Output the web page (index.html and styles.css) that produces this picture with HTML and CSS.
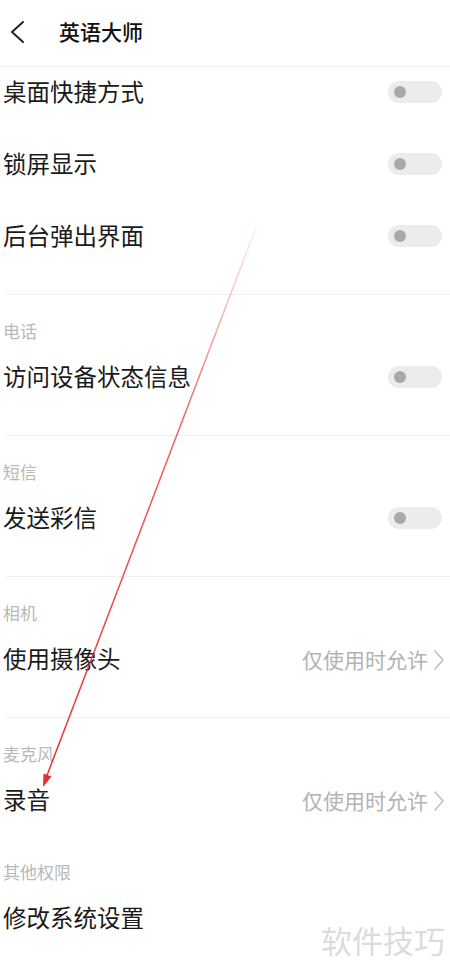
FILE: index.html
```html
<!DOCTYPE html>
<html lang="zh">
<head>
<meta charset="utf-8">
<link rel="stylesheet" href="styles.css">
</head>
<body>
<div class="page">
  <header class="header">
    <svg class="back" width="20" height="24" viewBox="0 0 20 24"><polyline points="14,2 3,12 14,22" fill="none" stroke="#222" stroke-width="2" stroke-linecap="round" stroke-linejoin="round"/></svg>
    <span class="title">英语大师</span>
  </header>

  <div class="row first"><span class="name">桌面快捷方式</span><span class="toggle"><span class="knob"></span></span></div>
  <div class="row"><span class="name">锁屏显示</span><span class="toggle"><span class="knob"></span></span></div>
  <div class="row"><span class="name">后台弹出界面</span><span class="toggle"><span class="knob"></span></span></div>

  <div class="divider"></div>
  <div class="label">电话</div>
  <div class="row"><span class="name">访问设备状态信息</span><span class="toggle"><span class="knob"></span></span></div>

  <div class="divider"></div>
  <div class="label">短信</div>
  <div class="row"><span class="name">发送彩信</span><span class="toggle"><span class="knob"></span></span></div>

  <div class="divider"></div>
  <div class="label">相机</div>
  <div class="row"><span class="name">使用摄像头</span><span class="value">仅使用时允许<svg class="chev" width="12" height="20" viewBox="0 0 12 20"><polyline points="2,1 10,10 2,19" fill="none" stroke="#bdbdbd" stroke-width="1.5" stroke-linecap="round" stroke-linejoin="round"/></svg></span></div>

  <div class="divider"></div>
  <div class="label">麦克风</div>
  <div class="row"><span class="name">录音</span><span class="value">仅使用时允许<svg class="chev" width="12" height="20" viewBox="0 0 12 20"><polyline points="2,1 10,10 2,19" fill="none" stroke="#bdbdbd" stroke-width="1.5" stroke-linecap="round" stroke-linejoin="round"/></svg></span></div>

  <div class="label gap">其他权限</div>
  <div class="row"><span class="name">修改系统设置</span></div>

  <div class="watermark">软件技巧</div>

  <svg class="arrow" width="450" height="975" viewBox="0 0 450 975">
    <defs>
      <linearGradient id="g" gradientUnits="userSpaceOnUse" x1="257" y1="225" x2="43" y2="786">
        <stop offset="0" stop-color="#e8302a" stop-opacity="0.05"/>
        <stop offset="0.35" stop-color="#e8302a" stop-opacity="0.75"/>
        <stop offset="1" stop-color="#e8302a" stop-opacity="1"/>
      </linearGradient>
    </defs>
    <line x1="257" y1="225" x2="46" y2="778" stroke="url(#g)" stroke-width="1.5"/>
    <polygon points="43,787 51.5,776.5 43.5,773.5" fill="#e8302a"/>
  </svg>
</div>
</body>
</html>
```

FILE: styles.css
```css
html, body {
  margin: 0;
  padding: 0;
  background: #ffffff;
}

.page {
  position: relative;
  width: 450px;
  height: 975px;
  overflow: hidden;
  font-family: "Noto Sans CJK SC", "Noto Sans", sans-serif;
  color: #1a1a1a;
}

.header {
  box-sizing: border-box;
  height: 67px;
  border-bottom: 1px solid #f3f3f3;
  display: flex;
  align-items: center;
  padding-left: 9px;
  padding-bottom: 4px;
}

.back {
  display: block;
  margin-top: 1px;
}

.title {
  margin-left: 30px;
  font-size: 21px;
  font-weight: 500;
  color: #111;
  line-height: 1;
}

.row {
  height: 72px;
  display: flex;
  align-items: center;
  justify-content: space-between;
  padding: 0 8px 0 3px;
  box-sizing: border-box;
}

.row.first {
  height: 62px;
  padding-bottom: 10px;
}

.name {
  font-size: 23.5px;
  line-height: 1;
  color: #1a1a1a;
  margin-top: -3px;
}

.toggle {
  width: 54px;
  height: 22px;
  border-radius: 11px;
  background: #ececec;
  display: flex;
  align-items: center;
  padding-left: 6px;
  box-sizing: border-box;
  margin-top: -2px;
}

.knob {
  width: 12px;
  height: 12px;
  border-radius: 50%;
  background: #a9a9a9;
}

.value {
  display: flex;
  align-items: center;
  gap: 5px;
  font-size: 21px;
  line-height: 1;
  color: #b3b3b3;
  margin-right: -3px;
  margin-top: -1px;
}

.chev {
  display: block;
}

.divider {
  height: 1px;
  margin: 21px 0 0 5px;
  background: #f1f1f1;
}

.label {
  margin-top: 26px;
  margin-bottom: 1px;
  height: 20px;
  line-height: 20px;
  padding-left: 3px;
  font-size: 17px;
  color: #b8b8b8;
}

.label.gap {
  margin-top: 25px;
}

.watermark {
  position: absolute;
  right: 5px;
  top: 920px;
  font-size: 31px;
  line-height: 40px;
  color: #dcdcdc;
}

.arrow {
  position: absolute;
  left: 0;
  top: 0;
  pointer-events: none;
}
```
